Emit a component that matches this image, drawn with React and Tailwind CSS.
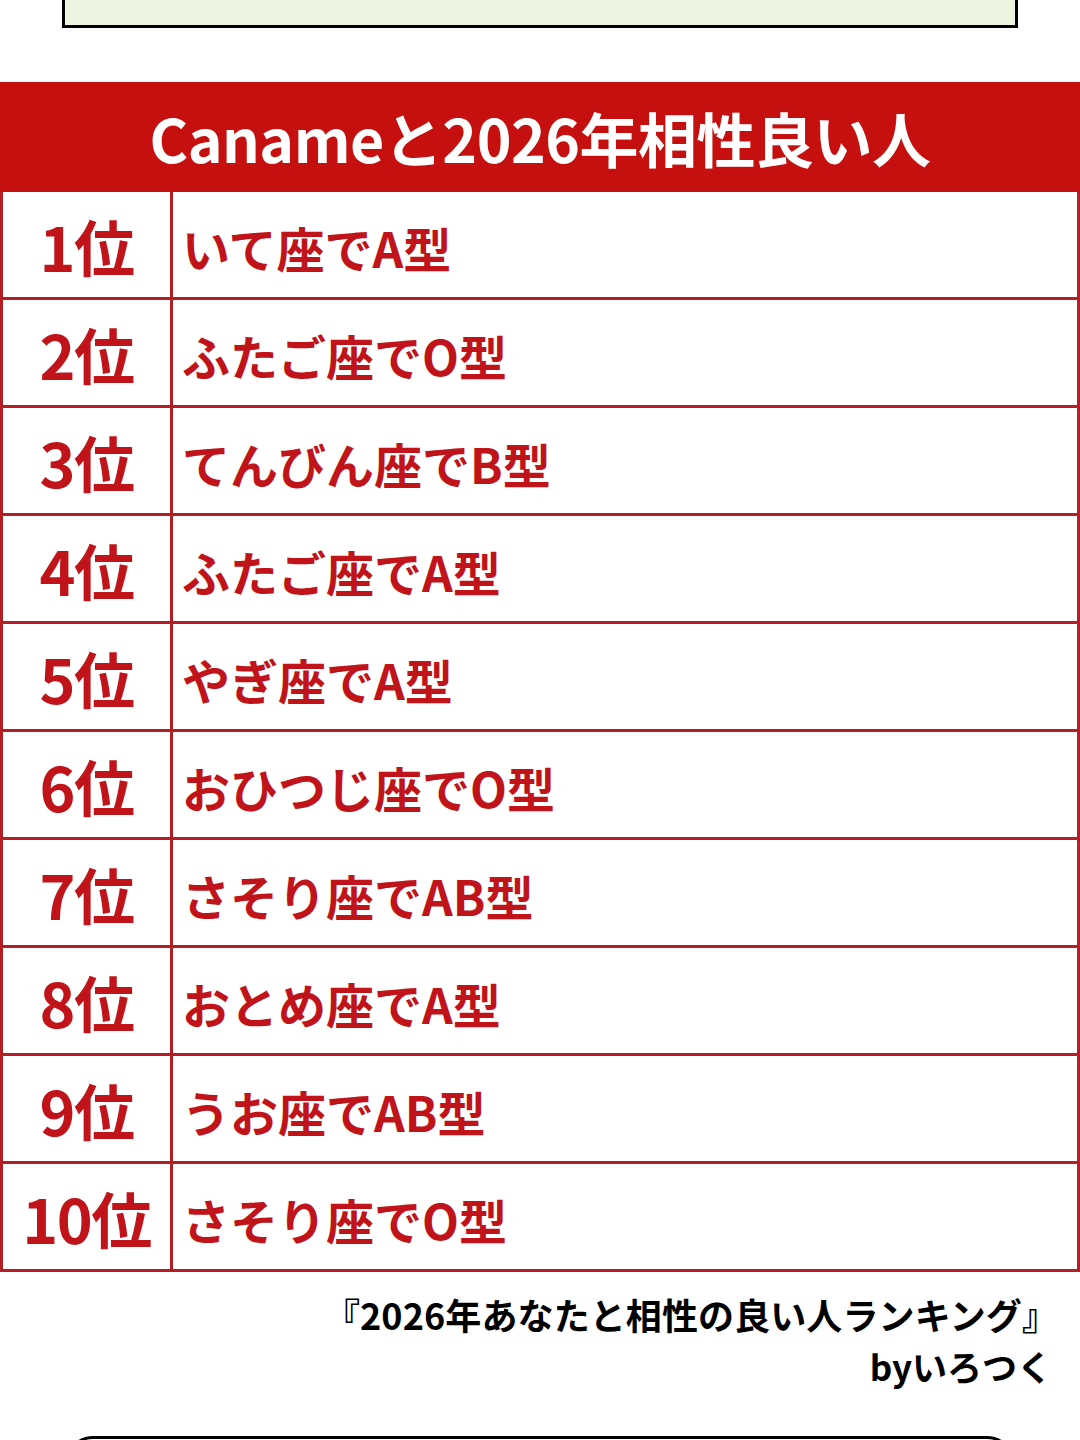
const ranks = [
  { rank: "1位", text: "いて座でA型" },
  { rank: "2位", text: "ふたご座でO型" },
  { rank: "3位", text: "てんびん座でB型" },
  { rank: "4位", text: "ふたご座でA型" },
  { rank: "5位", text: "やぎ座でA型" },
  { rank: "6位", text: "おひつじ座でO型" },
  { rank: "7位", text: "さそり座でAB型" },
  { rank: "8位", text: "おとめ座でA型" },
  { rank: "9位", text: "うお座でAB型" },
  { rank: "10位", text: "さそり座でO型" },
];

export default function App() {
  return (
    <div
      className="w-[1080px] h-[1440px] overflow-hidden bg-white"
      style={{ fontFamily: '"Noto Sans CJK JP", "Noto Sans", sans-serif' }}
    >
      {/* previous box */}
      <div className="mx-[62px] h-[28px] bg-[#edf5e1] border-[3px] border-t-0 border-black"></div>

      {/* ranking table */}
      <div className="mt-[54px]">
        <div className="h-[110px] bg-[#c6100f] flex items-center justify-center">
          <h2 className="text-white font-bold text-[59px] leading-none tracking-[-0.5px]">
            Canameと2026年相性良い人
          </h2>
        </div>
        <div className="w-[1080px] border-x-[3px] border-[#b41f25]">
          {ranks.map((r) => (
            <div key={r.rank} className="flex h-[108px] border-b-[3px] border-[#b41f25]">
              <div className="w-[170px] shrink-0 border-r-[3px] border-[#b41f25] flex items-center justify-center">
                <span className="text-[#c0141a] font-bold text-[61px] leading-none tracking-[-1.5px] pt-[2px]">
                  {r.rank}
                </span>
              </div>
              <div className="flex items-center pl-[9px]">
                <span className="text-[#c0141a] font-bold text-[48px] leading-none pt-[4px]">
                  {r.text}
                </span>
              </div>
            </div>
          ))}
        </div>
      </div>

      {/* credit */}
      <div className="pr-[22px] pt-[16px] text-right text-black font-bold text-[36px] leading-[52px]">
        <p className="tracking-[0.1px]">『2026年あなたと相性の良い人ランキング』</p>
        <p className="pr-[6px] text-[35px]">byいろつく</p>
      </div>

      {/* next box */}
      <div className="mx-[65px] mt-[44px] h-[40px] border-[3px] border-black rounded-t-[28px]"></div>
    </div>
  );
}
